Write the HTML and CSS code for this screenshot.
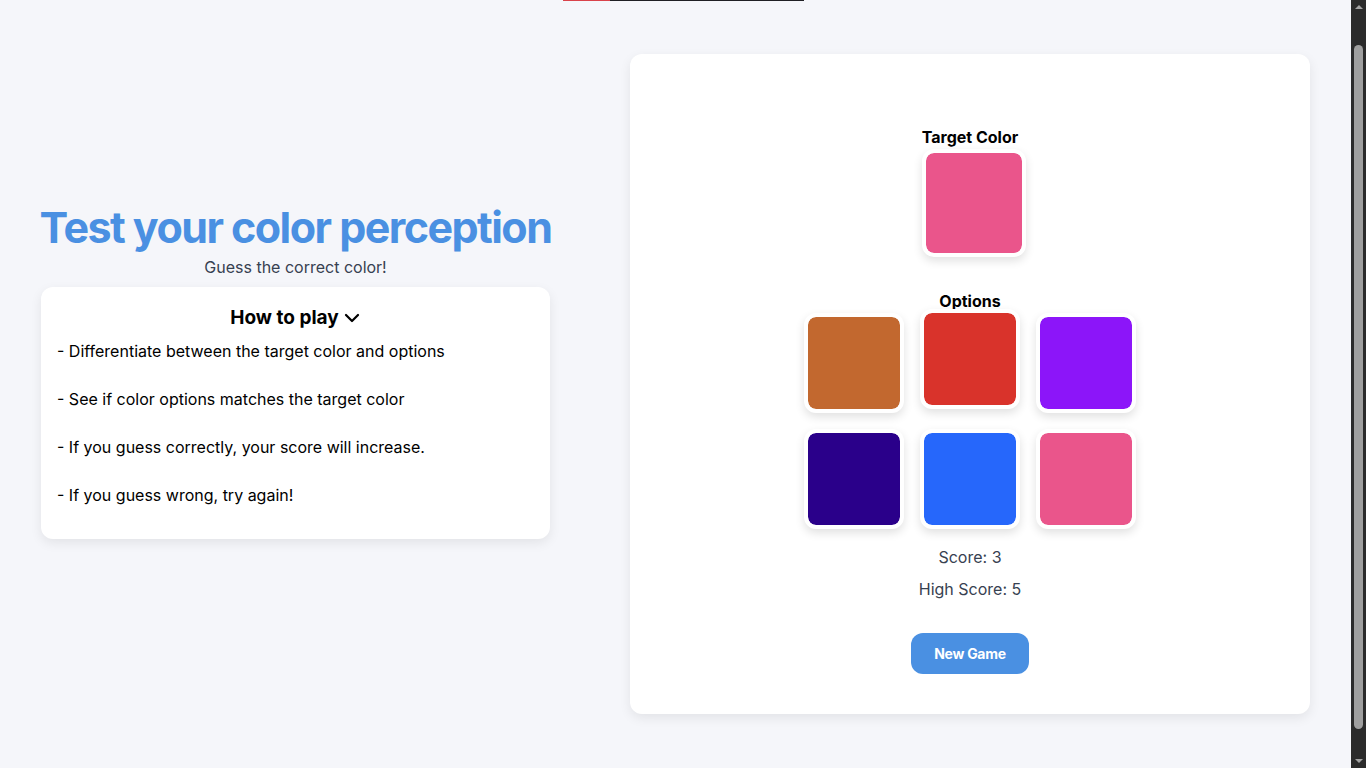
FILE: index.html
```html
<!DOCTYPE html>
<html lang="en">
<head>
<meta charset="utf-8">
<title>Color Perception Game</title>
<link rel="stylesheet" href="styles.css">
</head>
<body>
<div class="timer"><span class="timer-fill"></span></div>
<main class="page">
  <section class="intro">
    <h1 class="title">Test your color perception</h1>
    <p class="subtitle">Guess the correct color!</p>
    <div class="howto">
      <h2 class="howto-head">How to play
        <svg class="chev" viewBox="0 0 24 24" width="18" height="18" aria-hidden="true"><path d="M4 8l8 8 8-8" fill="none" stroke="#000" stroke-width="3" stroke-linecap="round" stroke-linejoin="round"/></svg>
      </h2>
      <ul class="rules">
        <li>- Differentiate between the target color and options</li>
        <li>- See if color options matches the target color</li>
        <li>- If you guess correctly, your score will increase.</li>
        <li>- If you guess wrong, try again!</li>
      </ul>
    </div>
  </section>
  <section class="game">
    <h3 class="label">Target Color</h3>
    <div class="swatch target c-pink"></div>
    <h3 class="label options-label">Options</h3>
    <div class="grid">
      <div class="swatch c-orange"></div>
      <div class="swatch c-red lifted"></div>
      <div class="swatch c-purple"></div>
      <div class="swatch c-indigo"></div>
      <div class="swatch c-blue"></div>
      <div class="swatch c-pink"></div>
    </div>
    <p class="score">Score: 3</p>
    <p class="score high">High Score: 5</p>
    <button class="btn">New Game</button>
  </section>
</main>
<div class="scrollbar" aria-hidden="true">
  <span class="sb-arrow up"></span>
  <span class="sb-track"><span class="sb-thumb"></span></span>
  <span class="sb-arrow down"></span>
</div>
</body>
</html>
```
FILE: styles.css
```css
html {
  background: #f5f6fa;
}
body {
  margin: 0;
  padding-right: 15px;
  background: #f5f6fa;
  font-family: Inter, "Noto Sans", sans-serif;
  color: #000;
}
.timer {
  position: absolute;
  top: 0;
  left: 563px;
  width: 241px;
  height: 1px;
  background: #1f1f24;
}
.timer-fill {
  display: block;
  width: 47px;
  height: 100%;
  background: #d9424a;
}
.scrollbar {
  position: fixed;
  top: 0;
  right: 0;
  width: 15px;
  height: 100vh;
  background: #2b2b2b;
  display: flex;
  flex-direction: column;
  align-items: center;
}
.sb-arrow {
  flex: none;
  width: 0;
  height: 0;
  border-left: 4px solid transparent;
  border-right: 4px solid transparent;
  margin: 5px 0;
}
.sb-arrow.up {
  border-bottom: 4px solid #a3a3a3;
}
.sb-arrow.down {
  border-top: 4px solid #a3a3a3;
}
.sb-track {
  flex: 1;
  align-self: stretch;
  display: flex;
  justify-content: center;
  padding: 31px 0 25px;
}
.sb-thumb {
  width: 9px;
  background: #9f9f9f;
  border-radius: 5px;
}
.page {
  min-height: 100vh;
  display: flex;
  align-items: center;
  justify-content: center;
  gap: 80px;
}
.intro {
  width: 509px;
  padding-bottom: 27px;
  display: flex;
  flex-direction: column;
  align-items: center;
}
.title {
  margin: 0 0 3px;
  font-size: 43px;
  line-height: 50px;
  font-weight: 700;
  color: #4a90e2;
  letter-spacing: -0.036em;
  white-space: nowrap;
}
.subtitle {
  margin: 0 0 8px;
  font-size: 16px;
  line-height: 24px;
  color: #374151;
}
.howto {
  align-self: stretch;
  background: #fff;
  border-radius: 12px;
  box-shadow: 0 4px 12px rgba(0, 0, 0, 0.08);
  padding: 17px 16px 32px;
}
.howto-head {
  margin: 0;
  display: flex;
  align-items: center;
  justify-content: center;
  gap: 4px;
  font-size: 19px;
  line-height: 28px;
  font-weight: 700;
}
.chev {
  display: block;
}
.rules {
  list-style: none;
  margin: 7px 0 0;
  padding: 0;
  display: flex;
  flex-direction: column;
  gap: 24px;
  font-size: 16px;
  line-height: 24px;
}
.game {
  width: 680px;
  box-sizing: border-box;
  background: #fff;
  border-radius: 12px;
  box-shadow: 0 4px 12px rgba(0, 0, 0, 0.08);
  padding: 71px 40px 40px;
  display: flex;
  flex-direction: column;
  align-items: center;
}
.label {
  margin: 0;
  font-size: 16px;
  line-height: 24px;
  font-weight: 700;
}
.options-label {
  margin-top: 32px;
}
.swatch {
  width: 92px;
  height: 92px;
  border: 4px solid #fff;
  border-radius: 12px;
  box-shadow: 0 4px 10px rgba(0, 0, 0, 0.12);
  background-clip: padding-box;
}
.swatch.target {
  width: 96px;
  height: 100px;
  margin-left: 8px;
}
.swatch.lifted {
  transform: translateY(-4px);
}
.grid {
  display: grid;
  grid-template-columns: repeat(3, 100px);
  gap: 16px;
}
.c-pink { background-color: #ea558b; }
.c-orange { background-color: #c2682f; }
.c-red { background-color: #d9332b; }
.c-purple { background-color: #8c15f9; }
.c-indigo { background-color: #2a008a; }
.c-blue { background-color: #2667fb; }
.score {
  margin: 16px 0 0;
  font-size: 16px;
  line-height: 24px;
  color: #374151;
}
.score.high {
  margin-top: 8px;
}
.btn {
  margin-top: 32px;
  width: 118px;
  height: 41px;
  border: 0;
  border-radius: 12px;
  background: #4a90e2;
  color: #fff;
  font-family: Inter, "Noto Sans", sans-serif;
  font-size: 14px;
  font-weight: 700;
  letter-spacing: -0.02em;
}
```
